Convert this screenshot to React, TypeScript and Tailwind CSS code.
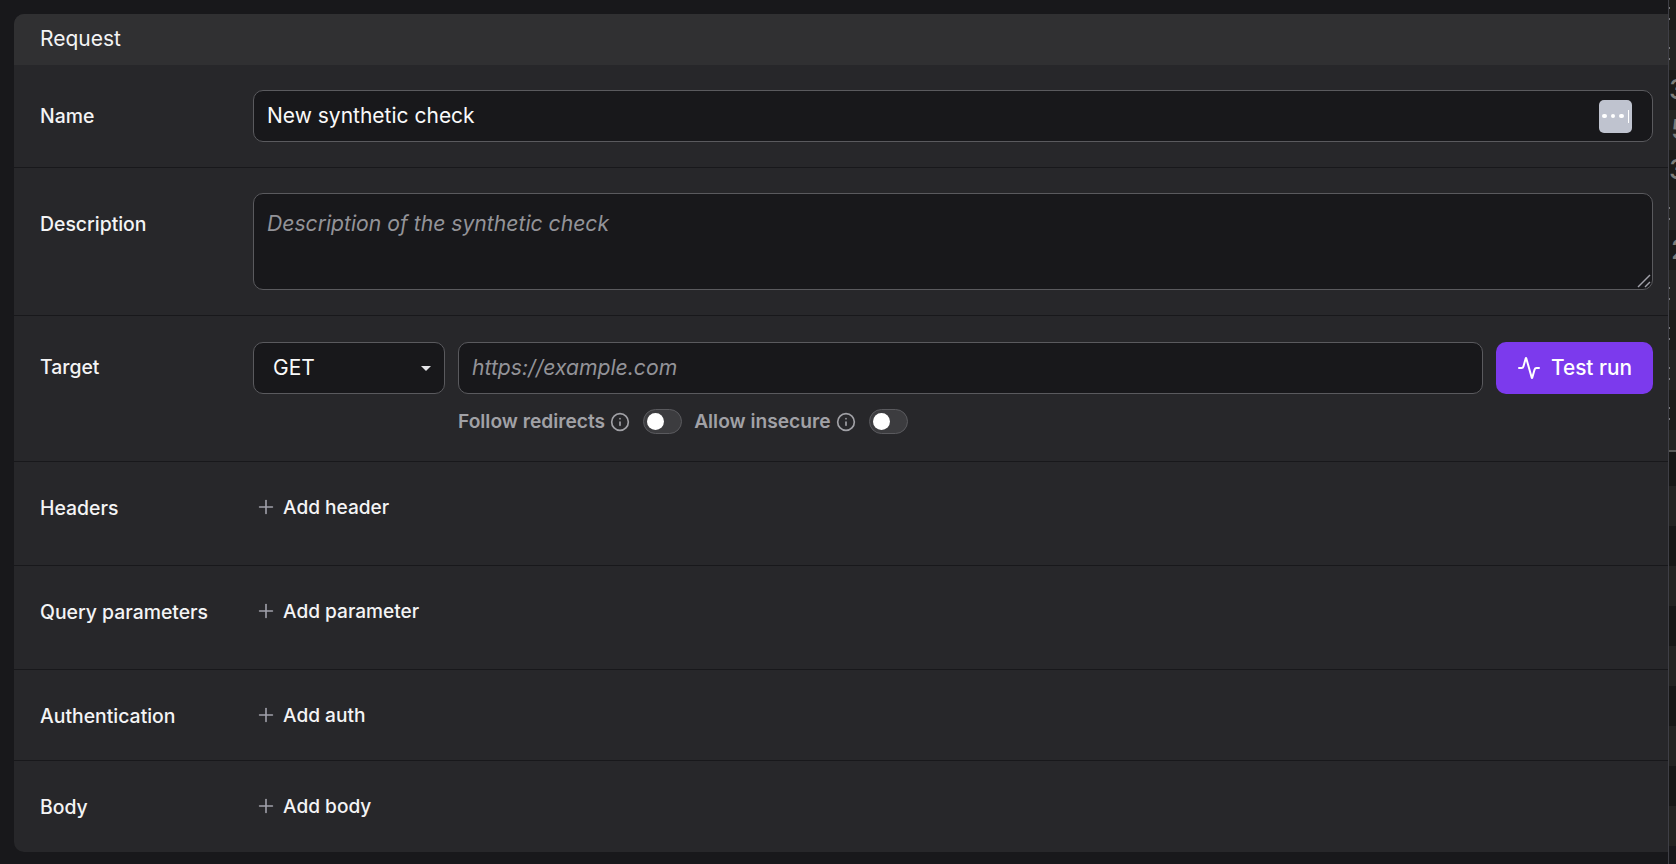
import { Activity, Info, Plus } from 'lucide-react';

const stripe = [
  { h: 'h-[30px]', bg: 'bg-[#1b1b1a]', text: '', pad: '', ticks: 'first' },
  { h: 'h-[40px]', bg: 'bg-[#252522]', text: '', pad: '', ticks: 'yes' },
  { h: 'h-[40px]', bg: 'bg-[#1b1b1a]', text: '3', pad: '', ticks: '' },
  { h: 'h-[40px]', bg: 'bg-[#252522]', text: '5', pad: 'pl-[2px]', ticks: '' },
  { h: 'h-[40px]', bg: 'bg-[#1b1b1a]', text: '3', pad: '', ticks: '' },
  { h: 'h-[40px]', bg: 'bg-[#252522]', text: '', pad: '', ticks: 'yes' },
  { h: 'h-[40px]', bg: 'bg-[#1b1b1a]', text: '2', pad: 'pl-[2px]', ticks: '' },
  { h: 'h-[40px]', bg: 'bg-[#252522]', text: '', pad: '', ticks: 'yes' },
  { h: 'h-[40px]', bg: 'bg-[#1b1b1a]', text: '', pad: '', ticks: 'yes' },
  { h: 'h-[40px]', bg: 'bg-[#252522]', text: '', pad: '', ticks: 'yes' },
  { h: 'h-[40px]', bg: 'bg-[#1b1b1a]', text: '', pad: '', ticks: 'yes' },
  { h: 'h-[20px]', bg: 'bg-[#252522]', text: '', pad: '', ticks: '' },
  { h: 'h-[2px]', bg: 'bg-[#5a5a58]', text: '', pad: '', ticks: '' },
  { h: 'h-[34px]', bg: 'bg-[#171716]', text: '', pad: '', ticks: '' },
  { h: 'h-[40px]', bg: 'bg-[#232321]', text: '', pad: '', ticks: '' },
  { h: 'h-[40px]', bg: 'bg-[#171716]', text: '', pad: '', ticks: '' },
  { h: 'h-[40px]', bg: 'bg-[#232321]', text: '', pad: '', ticks: '' },
  { h: 'h-[40px]', bg: 'bg-[#171716]', text: '', pad: '', ticks: '' },
  { h: 'h-[40px]', bg: 'bg-[#232321]', text: '', pad: '', ticks: '' },
  { h: 'h-[40px]', bg: 'bg-[#171716]', text: '', pad: '', ticks: '' },
  { h: 'h-[40px]', bg: 'bg-[#232321]', text: '', pad: '', ticks: '' },
  { h: 'h-[40px]', bg: 'bg-[#171716]', text: '', pad: '', ticks: '' },
  { h: 'h-[40px]', bg: 'bg-[#232321]', text: '', pad: '', ticks: '' },
];

function Row({
  label,
  labelClass,
  last,
  className,
  children,
}: {
  label: string;
  labelClass: string;
  last?: boolean;
  className?: string;
  children: React.ReactNode;
}) {
  return (
    <div className={`flex pr-[15px] pl-[26px] ${last ? '' : 'border-b border-[#18181b]'} ${className ?? ''}`}>
      <div className={`flex w-[213px] shrink-0 items-center text-[19.4px] font-medium text-[#f4f4f5] ${labelClass}`}>
        {label}
      </div>
      <div className="min-w-0 flex-1">{children}</div>
    </div>
  );
}

function AddButton({ label }: { label: string }) {
  return (
    <div className="flex h-10 items-center gap-[6px] pl-[2px] text-[19.1px] font-medium text-[#f4f4f5]">
      <Plus className="h-[22px] w-[22px] text-[#a1a1aa]" strokeWidth={1.75} />
      {label}
    </div>
  );
}

function Toggle() {
  return (
    <div className="flex h-[25px] w-[39px] items-center rounded-full border border-[#5a5a5e] bg-[#3c3c3f] pl-[3px]">
      <div className="h-[17px] w-[17px] rounded-full bg-white" />
    </div>
  );
}

export default function App() {
  return (
    <div className="flex h-[864px] w-[1676px] overflow-hidden bg-[#18181b] font-['Inter',sans-serif]">
      <div className="flex-1 pt-[14px] pl-[14px]">
        <div className="h-[838px] overflow-hidden rounded-l-[10px] bg-[#27272a]">
          <div className="flex h-[51px] items-center bg-[#303032] pb-[1px] pl-[26px] text-[21px] text-[#f4f4f5]">Request</div>

          <Row label="Name" labelClass="h-[54px]" className="h-[103px] pt-[25px]">
            <div className="flex h-[52px] items-center justify-between rounded-[10px] border border-[#5a5a5e] bg-[#18181b] pr-[20px] pl-[13px] text-[21px] text-[#fafafa]">
              New synthetic check
              <div className="flex h-[33px] w-[33px] items-center justify-center gap-[4px] rounded-[5px] bg-[#bfc3cf]">
                <span className="h-[4.5px] w-[4.5px] rounded-full bg-white" />
                <span className="h-[4.5px] w-[4.5px] rounded-full bg-white" />
                <span className="h-[4.5px] w-[4.5px] rounded-full bg-white" />
                <span className="h-[13px] w-[1.5px] bg-white" />
              </div>
            </div>
          </Row>

          <Row label="Description" labelClass="h-[64px]" className="h-[148px] pt-[25px]">
            <div className="relative h-[97px] rounded-[10px] border border-[#5a5a5e] bg-[#18181b] pt-[14px] pl-[13px] text-[21.15px] text-[#939398] italic">
              Description of the synthetic check
              <svg className="absolute right-[1px] bottom-[1px]" width="14" height="14" viewBox="0 0 14 14" fill="none">
                <path d="M1 13L13 1" stroke="#a1a1aa" strokeWidth="1.5" />
                <path d="M8 13L13 8" stroke="#a1a1aa" strokeWidth="1.5" />
              </svg>
            </div>
          </Row>

          <Row label="Target" labelClass="h-[52px]" className="h-[146px] pt-[26px]">
            <div className="flex gap-[13px]">
              <div className="flex h-[52px] w-[192px] shrink-0 items-center justify-between rounded-[10px] border border-[#5a5a5e] bg-[#18181b] pr-[13px] pl-[19px] text-[21px] text-[#fafafa]">
                GET
                <span className="h-0 w-0 border-x-[5px] border-t-[5px] border-x-transparent border-t-[#e4e4e7]" />
              </div>
              <div className="flex h-[52px] flex-1 items-center rounded-[10px] border border-[#5a5a5e] bg-[#18181b] pl-[13px] text-[21.15px] text-[#939398] italic">
                https://example.com
              </div>
              <div className="flex h-[52px] w-[157px] shrink-0 items-center justify-center gap-[10px] rounded-[10px] bg-[#7c3aed] text-[20.8px] font-medium text-white">
                <Activity className="h-6 w-6" strokeWidth={2} />
                Test run
              </div>
            </div>
            <div className="mt-[15px] flex h-[25px] items-center pl-[205px] text-[19.2px] font-semibold text-[#a1a1a6]">
              Follow redirects
              <Info className="mr-[13px] ml-[5px] h-[20px] w-[20px]" strokeWidth={2} />
              <Toggle />
              <span className="ml-[12px]">Allow insecure</span>
              <Info className="mr-[13px] ml-[5px] h-[20px] w-[20px]" strokeWidth={2} />
              <Toggle />
            </div>
          </Row>

          <Row label="Headers" labelClass="h-[44px]" className="h-[104px] pt-[25px]">
            <AddButton label="Add header" />
          </Row>
          <Row label="Query parameters" labelClass="h-[44px]" className="h-[104px] pt-[25px]">
            <AddButton label="Add parameter" />
          </Row>
          <Row label="Authentication" labelClass="h-[44px]" className="h-[91px] pt-[25px]">
            <AddButton label="Add auth" />
          </Row>
          <Row label="Body" labelClass="h-[44px]" last className="h-[91px] pt-[25px]">
            <AddButton label="Add body" />
          </Row>
        </div>
      </div>
      <div className="w-[8px] shrink-0 overflow-hidden border-l border-[#3f3f46]">
        {stripe.map((s, i) => (
          <div
            key={i}
            className={`relative ${s.h} ${s.bg} ${s.pad} flex items-center font-['Inter',sans-serif] text-[27px] font-medium text-[#7d7d7a]`}
          >
            {s.text}
            {s.ticks === 'first' && (
              <>
                <span className="absolute top-[7px] left-0 h-[2px] w-[1px] bg-[#77777a]" />
                <span className="absolute top-[18px] left-0 h-[2px] w-[1px] bg-[#77777a]" />
              </>
            )}
            {s.ticks === 'yes' && (
              <>
                <span className="absolute top-[17px] left-0 h-[2px] w-[1px] bg-[#77777a]" />
                <span className="absolute top-[28px] left-0 h-[2px] w-[1px] bg-[#77777a]" />
              </>
            )}
          </div>
        ))}
      </div>
    </div>
  );
}
